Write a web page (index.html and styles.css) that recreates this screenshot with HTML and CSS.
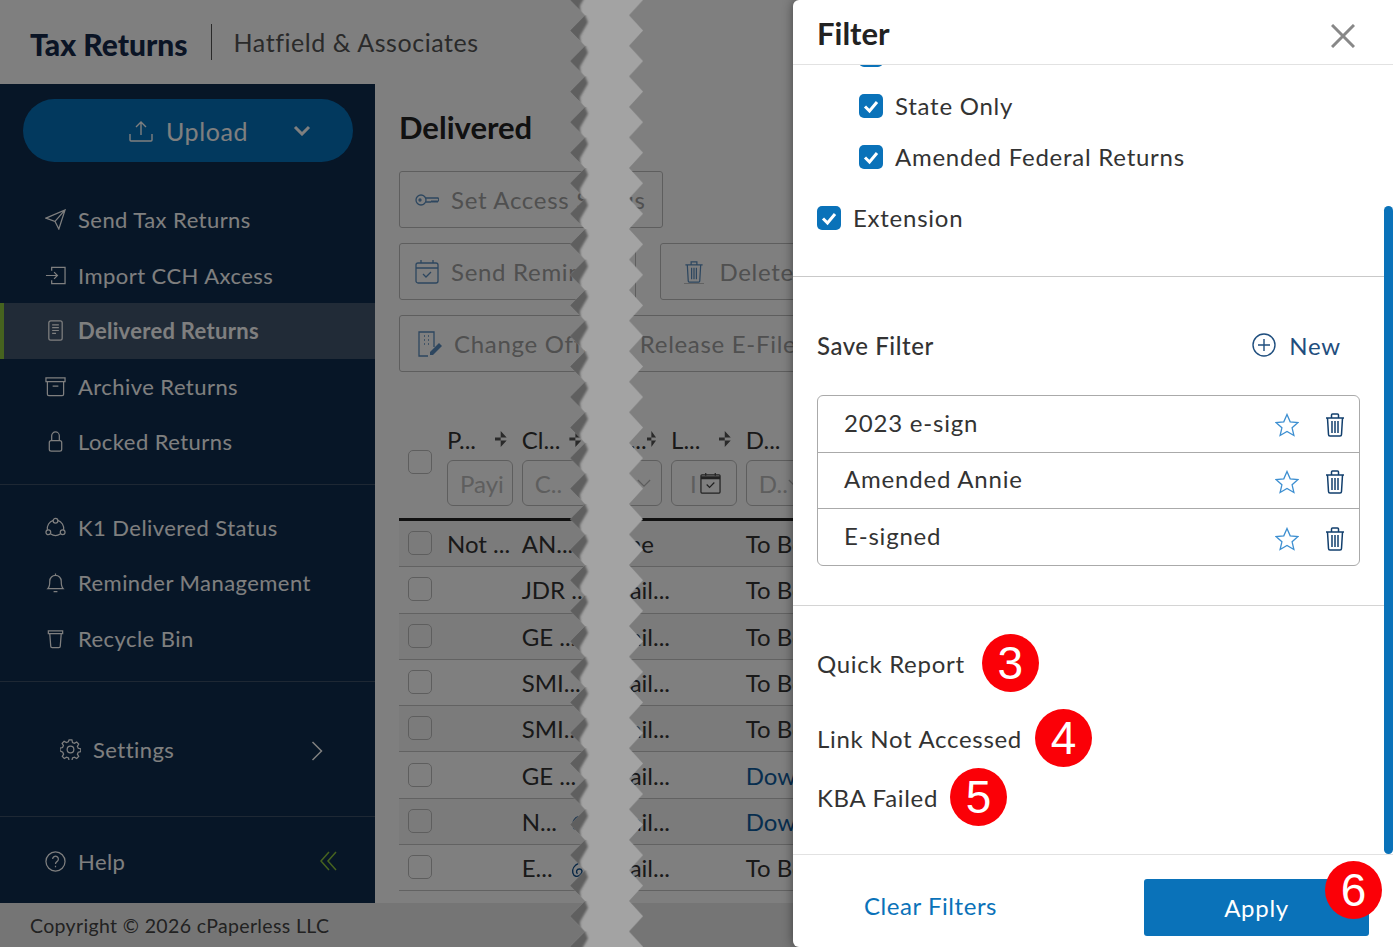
FILE: index.html
```html
<!DOCTYPE html>
<html lang="en">
<head>
<meta charset="utf-8">
<title>Tax Returns</title>
<link rel="stylesheet" href="styles.css">
</head>
<body>
<div class="app">
  <header class="topbar">
    <span class="brand">Tax Returns</span>
    <span class="firm">Hatfield &amp; Associates</span>
  </header>
  <div class="middle">
    <aside class="sidebar">
      <div class="upload-wrap">
        <button class="upload">
          <svg class="up-ico" viewBox="0 0 24 22"><path d="M12 15V2M7 7l5-5 5 5M1 14v6a1 1 0 0 0 1 1h20a1 1 0 0 0 1-1v-6"/></svg>
          <span class="up-text">Upload</span>
          <svg class="up-chev" viewBox="0 0 18 11"><path d="M2 2l7 7 7-7"/></svg>
        </button>
      </div>
      <nav class="nav nav-one">
        <a class="item"><svg class="ico" viewBox="0 0 22 22"><path d="M1 9.5L21 1l-6.500 20-4-8zM10.500 13L21 1"/></svg>Send Tax Returns</a>
        <a class="item"><svg class="ico" viewBox="0 0 22 22"><path d="M7 6V2.500h14v17H7V16M1 11h12M9.500 7.500L13 11l-3.500 3.500"/></svg>Import CCH Axcess</a>
        <a class="item active"><svg class="ico" viewBox="0 0 22 22"><rect x="4" y="1" width="14" height="20" rx="2"/><path d="M7.500 5h7M7.500 8h7M7.500 11h7M7.500 14h4"/></svg>Delivered Returns</a>
        <a class="item"><svg class="ico" viewBox="0 0 22 22"><path d="M1 2h20v4H1zM2.500 6v13a1.500 1.500 0 0 0 1.500 1.500h14a1.500 1.500 0 0 0 1.500-1.500V6M8 10.500h6"/></svg>Archive Returns</a>
        <a class="item"><svg class="ico" viewBox="0 0 22 22"><rect x="4.500" y="10" width="13" height="11" rx="2"/><path d="M7 10V5a4 4 0 0 1 8 0v5"/></svg>Locked Returns</a>
      </nav>
      <nav class="nav nav-two">
        <a class="item"><svg class="ico" viewBox="0 0 22 22"><circle cx="11" cy="4" r="2.500"/><circle cx="3.500" cy="16" r="2.500"/><circle cx="18.500" cy="16" r="2.500"/><path d="M8.700 3.500A9 9 0 0 0 2.500 13.500M13.300 3.500a9 9 0 0 1 6.200 10M6 17.800a9 9 0 0 0 10 0"/></svg>K1 Delivered Status</a>
        <a class="item"><svg class="ico" viewBox="0 0 22 22"><path d="M3 17.500c2-2 2-4 2-8a6 6 0 0 1 12 0c0 4 0 6 2 8zM9 20.500h4M11 1.500v2"/></svg>Reminder Management</a>
        <a class="item"><svg class="ico" viewBox="0 0 22 22"><path d="M3.500 3h15v3h-15zM5 6l1 13a1.500 1.500 0 0 0 1.500 1.500h7A1.500 1.500 0 0 0 16 19l1-13"/></svg>Recycle Bin</a>
      </nav>
      <div class="settings">
        <a class="set-link"><svg class="ico" viewBox="0 0 22 22"><circle cx="11" cy="11" r="3.500"/><path d="M9.500 1h3l.6 2.700 2 .9 2.400-1.400 2.100 2.100-1.400 2.400.9 2 2.700.6v3l-2.700.6-.9 2 1.400 2.400-2.100 2.100-2.400-1.400-2 .9-.6 2.700h-3l-.6-2.700-2-.9-2.400 1.400-2.100-2.100 1.400-2.400-.9-2L0 12.500v-3l2.700-.6.9-2-1.400-2.400 2.100-2.100 2.400 1.400 2-.9z"/></svg>Settings</a>
        <svg class="set-chev" viewBox="0 0 12 20"><path d="M1.500 1l9 9-9 9"/></svg>
      </div>
      <div class="help">
        <a class="set-link"><svg class="ico" viewBox="0 0 22 22"><circle cx="11" cy="11" r="10"/><path d="M8 8.500a3 3 0 1 1 4.500 2.600c-1 .6-1.500 1.200-1.500 2.400M11 15.500v1.500"/></svg>Help</a>
        <svg class="collapse" viewBox="0 0 17 20"><path d="M9 1L1 10l8 9M16 1l-8 9 8 9"/></svg>
      </div>
    </aside>
    <main class="main">
      <h1 class="title">Delivered</h1>
      <div class="actions">
        <button class="act"><svg class="act-ico" viewBox="0 0 24 14"><circle cx="6" cy="7" r="5"/><circle cx="5" cy="7" r="1"/><path d="M11 5h12l1 2-2 2-1-1-1 1-1-1-1 1-1-1-1 1h-5"/></svg>Set Access Status</button>
      </div>
      <div class="actions">
        <button class="act"><svg class="act-ico cal" viewBox="0 0 24 24"><rect x="1" y="3" width="22" height="20" rx="2"/><path d="M1 8h22M6 0v3M18 0v3M8 14l3 3 5-5"/></svg>Send Reminder</button>
        <button class="act"><svg class="act-ico tr" viewBox="0 0 20 24"><path d="M1 5h18M7 5V2h6v3M3 5l1 17a1 1 0 0 0 1 1h10a1 1 0 0 0 1-1l1-17M7.500 8v12M10 8v12M12.500 8v12"/></svg>Delete</button>
      </div>
      <div class="actions">
        <button class="act"><svg class="act-ico off" viewBox="0 0 24 26"><path d="M16 16V1H1v24h9M6 5h1M10 5h1M6 9h1M10 9h1M6 13h1M10 13h1"/><path class="solid" d="M12 21l9-9 3 3-9 9h-3z"/></svg>Change Office / Release E-File</button>
      </div>
      <div class="table">
        <div class="thead">
          <span class="box head-box"></span>
          <div class="th"><div class="lab"><span>P...</span><i class="sort"></i></div><div class="inp">Payi</div></div>
          <div class="th"><div class="lab"><span>Cl...</span><i class="sort"></i></div><div class="inp">C..</div></div>
          <div class="th"><div class="lab"><span>Em...</span><i class="sort"></i></div><div class="inp inp-sel"><svg class="sel" viewBox="0 0 16 10"><path d="M1 1l7 7 7-7"/></svg></div></div>
          <div class="th"><div class="lab"><span>L...</span><i class="sort"></i></div><div class="inp inp-date"><span>I</span><svg class="date" viewBox="0 0 22 22"><rect x="1" y="2" width="20" height="19" rx="1"/><path class="thick" d="M1 5h20"/><path d="M6 0v3M16 0v3M7 12l3 3 5-5"/></svg></div></div>
          <div class="th"><div class="lab"><span>D...</span></div><div class="inp inp-last"><span>D..</span><svg class="sel" viewBox="0 0 16 10"><path d="M1 1l7 7 7-7"/></svg></div></div>
        </div>
        <div class="tr odd"><span class="box"></span><span>Not ...</span><span>AN...</span><span>None</span><span></span><span>To Be Sent</span></div>
        <div class="tr"><span class="box"></span><span></span><span>JDR ...</span><span>Email...</span><span></span><span>To Be Sent</span></div>
        <div class="tr odd"><span class="box"></span><span></span><span>GE ...</span><span>Email...</span><span></span><span>To Be Sent</span></div>
        <div class="tr"><span class="box"></span><span></span><span>SMI...</span><span>Email...</span><span></span><span>To Be Sent</span></div>
        <div class="tr odd"><span class="box"></span><span></span><span>SMI...</span><span>Email...</span><span></span><span>To Be Sent</span></div>
        <div class="tr"><span class="box"></span><span></span><span>GE ...</span><span>Email...</span><span></span><span class="link">Download</span></div>
        <div class="tr odd"><span class="box"></span><span></span><span class="with-ico">N...<svg class="chain" viewBox="0 0 16 18"><path d="M9 2C5 4 2 8 3 12s5 5 8 2 2-6-1-6-4 3-2 5"/></svg></span><span>Email...</span><span></span><span class="link">Download</span></div>
        <div class="tr"><span class="box"></span><span></span><span class="with-ico">E...<svg class="chain" viewBox="0 0 16 18"><path d="M9 2C5 4 2 8 3 12s5 5 8 2 2-6-1-6-4 3-2 5"/></svg></span><span>Email...</span><span></span><span>To Be Sent</span></div>
      </div>
    </main>
  </div>
  <footer class="copy">Copyright © 2026 cPaperless LLC</footer>
</div>

<div class="dim"></div>

<svg class="tear" viewBox="0 0 74 947" aria-hidden="true">
  <defs>
    <filter id="soft" x="-30%" y="-30%" width="160%" height="160%"><feGaussianBlur stdDeviation="1.300"/></filter>
    <clipPath id="tooth"><path d="M15 0L0 15.270 15 30.540H59L73 15.270 59 0z"/></clipPath>
    <pattern id="zig" width="74" height="30.540" y="15.270" patternUnits="userSpaceOnUse">
      <path fill="#a3a3a3" d="M15 0L0 15.270 15 30.540H59L73 15.270 59 0z"/>
      <g clip-path="url(#tooth)">
        <path fill="#5f5f5f" filter="url(#soft)" d="M14 -3L-3 15 11 32 10 21 18 7z"/>
      </g>
    </pattern>
  </defs>
  <rect width="74" height="947" fill="url(#zig)"/>
</svg>

<aside class="drawer">
  <div class="dr-head">
    <h2 class="dr-title">Filter</h2>
    <svg class="close" viewBox="0 0 24 24"><path d="M1 1l22 22M23 1L1 23"/></svg>
  </div>
  <div class="dr-body">
    <div class="scrollbar"></div>
    <label class="check sub clipped"><span class="tick"><svg viewBox="0 0 24 24"><path d="M6 12.500l4.500 4.500L18 8"/></svg></span></label>
    <label class="check sub"><span class="tick"><svg viewBox="0 0 24 24"><path d="M6 12.500l4.500 4.500L18 8"/></svg></span>State Only</label>
    <label class="check sub"><span class="tick"><svg viewBox="0 0 24 24"><path d="M6 12.500l4.500 4.500L18 8"/></svg></span>Amended Federal Returns</label>
    <label class="check ext"><span class="tick"><svg viewBox="0 0 24 24"><path d="M6 12.500l4.500 4.500L18 8"/></svg></span>Extension</label>
    <hr class="rule rule-a">
    <div class="save-row">
      <span class="save">Save Filter</span>
      <span class="new"><svg class="plus" viewBox="0 0 24 24"><circle cx="12" cy="12" r="11"/><path d="M12 6v12M6 12h12"/></svg>New</span>
    </div>
    <ul class="saved">
      <li class="saved-row"><span>2023 e-sign</span><svg class="star" viewBox="0 0 24 24"><path d="M12 1.500l3.200 7.300 7.800.8-5.900 5.200 1.800 7.700-6.900-4-6.900 4 1.800-7.700L1 9.600l7.800-.8z"/></svg><svg class="bin" viewBox="0 0 20 24"><path d="M1 5h18M6.500 5V2a1 1 0 0 1 1-1h5a1 1 0 0 1 1 1v3M2.500 5l1 16.500A1.500 1.500 0 0 0 5 23h10a1.500 1.500 0 0 0 1.500-1.500l1-16.500M7 8v12M10 8v12M13 8v12"/></svg></li>
      <li class="saved-row"><span>Amended Annie</span><svg class="star" viewBox="0 0 24 24"><path d="M12 1.500l3.200 7.300 7.800.8-5.900 5.200 1.800 7.700-6.900-4-6.900 4 1.800-7.700L1 9.600l7.800-.8z"/></svg><svg class="bin" viewBox="0 0 20 24"><path d="M1 5h18M6.500 5V2a1 1 0 0 1 1-1h5a1 1 0 0 1 1 1v3M2.500 5l1 16.500A1.500 1.500 0 0 0 5 23h10a1.500 1.500 0 0 0 1.500-1.500l1-16.500M7 8v12M10 8v12M13 8v12"/></svg></li>
      <li class="saved-row"><span>E-signed</span><svg class="star" viewBox="0 0 24 24"><path d="M12 1.500l3.200 7.300 7.800.8-5.900 5.200 1.800 7.700-6.900-4-6.900 4 1.800-7.700L1 9.600l7.800-.8z"/></svg><svg class="bin" viewBox="0 0 20 24"><path d="M1 5h18M6.500 5V2a1 1 0 0 1 1-1h5a1 1 0 0 1 1 1v3M2.500 5l1 16.500A1.500 1.500 0 0 0 5 23h10a1.500 1.500 0 0 0 1.500-1.500l1-16.500M7 8v12M10 8v12M13 8v12"/></svg></li>
    </ul>
    <hr class="rule rule-b">
    <div class="report r3"><span>Quick Report</span><b class="badge">3</b></div>
    <div class="report r4"><span>Link Not Accessed</span><b class="badge">4</b></div>
    <div class="report r5"><span>KBA Failed</span><b class="badge">5</b></div>
  </div>
  <div class="dr-foot">
    <a class="clear">Clear Filters</a>
    <button class="apply">Apply</button>
    <b class="badge badge-six">6</b>
  </div>
</aside>
</body>
</html>
```

FILE: styles.css
```css
* { box-sizing: border-box; }
html, body { margin: 0; height: 100%; overflow: hidden; }
body { font-family: "Lato", "Open Sans", sans-serif; color: #333; background: #fff; position: relative; }
svg { display: block; flex: none; fill: none; stroke: currentColor; }
button { font: inherit; background: none; }

.app { height: 100vh; display: flex; flex-direction: column; }
.topbar { height: 84px; flex: none; display: flex; align-items: center; padding-left: 30px; background: #fff; }
.brand { font-size: 30px; font-weight: 900; color: #14294a; padding-right: 23px; line-height: 36px; margin-top: 4px; }
.firm { font-size: 25px; color: #555; letter-spacing: .55px; border-left: 1px solid #555; padding-left: 22px; height: 36px; line-height: 36px; margin-top: -1px; }

.middle { flex: 1; display: flex; min-height: 0; }
.sidebar { width: 375px; flex: none; background: #0e2c4e; color: #fff; display: flex; flex-direction: column; }
.upload-wrap { padding: 15px 22px 30px 23px; }
.upload { width: 100%; height: 63px; border: 0; border-radius: 32px; background: #0572bc; color: #fff; display: flex; align-items: center; padding-left: 106px; }
.up-ico { width: 24px; height: 22px; stroke-width: 1.400; }
.up-text { font-size: 25px; margin-left: 13px; letter-spacing: .6px; }
.up-chev { width: 18px; height: 11px; stroke-width: 3; margin-left: 45px; }

.nav { display: flex; flex-direction: column; }
.nav-one { padding-bottom: 14px; border-bottom: 1px solid #3d5068; }
.nav-two { padding: 15px 0; border-bottom: 1px solid #3d5068; }
.item { height: 55.500px; display: flex; align-items: center; font-size: 22px; letter-spacing: .45px; padding-left: 45px; gap: 12px; }
.ico { width: 21px; height: 21px; stroke-width: 1.300; }
.item.active { background: #42566f; border-left: 4px solid #8dc63f; padding-left: 41px; font-weight: 700; letter-spacing: .3px; }
.settings { height: 135px; display: flex; align-items: center; padding-left: 60px; border-bottom: 1px solid #3d5068; }
.set-link { display: flex; align-items: center; font-size: 22px; letter-spacing: .45px; gap: 12px; }
.set-chev { width: 12px; height: 20px; stroke-width: 1.500; margin-left: 137px; margin-top: 3px; }
.help { flex: 1; display: flex; align-items: center; padding-left: 45px; padding-top: 2px; }
.collapse { width: 17px; height: 20px; stroke: #8dc63f; stroke-width: 1.500; margin-left: 195px; }

.main { flex: 1; min-width: 0; overflow: hidden; padding: 24px 0 0 24px; background: #fff; }
.title { margin: 0 0 25px; font-size: 31px; line-height: 38px; font-weight: 700; color: #222; }
.actions { display: flex; gap: 24px; margin-bottom: 15px; }
.act { height: 57px; display: flex; align-items: center; gap: 12px; padding: 0 16px 0 15px; border: 1px solid #bdbdbd; border-radius: 3px; color: #a0a0a0; font-size: 24px; letter-spacing: .7px; white-space: nowrap; }
.act-ico { width: 24px; height: 14px; color: #5a8dbe; stroke-width: 1.300; }
.act-ico.cal { height: 24px; }
.act-ico.tr { width: 20px; height: 24px; margin: 0 3px 0 8px; }
.act-ico.off { height: 26px; margin-left: 3px; }
.act-ico .solid { fill: #5a8dbe; stroke: none; }

.table { margin-top: 46px; font-size: 24px; color: #333; }
.thead, .tr { display: grid; grid-template-columns: 48px 74.700px 74.700px 74.700px 74.700px 1fr; }
.thead { height: 103px; border-bottom: 3px solid #222; align-items: start; padding-bottom: 0; }
.box { display: block; width: 24px; height: 24px; margin-left: 9px; border: 1px solid #bdbdbd; border-radius: 5px; }
.head-box { margin-top: 32px; }
.th { white-space: nowrap; }
.lab { height: 42px; display: flex; align-items: center; justify-content: space-between; padding-right: 15px; margin-top: 0; }
.sort { display: block; width: 12px; height: 16px; background: #555; clip-path: polygon(50% 0, 100% 40%, 0 40%, 0 60%, 100% 60%, 50% 100%); }
.inp { width: 66px; height: 46px; border: 1px solid #bdbdbd; border-radius: 6px; display: flex; align-items: center; padding-left: 12px; color: #bcbcbc; overflow: hidden; }
.inp-sel { justify-content: flex-end; padding-right: 10px; }
.inp-date { justify-content: space-between; padding: 0 15px 0 18px; }
.inp-last { gap: 0; }
.sel { width: 14px; height: 9px; color: #bbb; stroke-width: 1.500; flex: none; }
.date { width: 21px; height: 21px; color: #444; stroke-width: 1.300; }
.date .thick { stroke-width: 3; }
.tr { height: 46.300px; align-items: center; border-bottom: 1px solid #c4c4c4; white-space: nowrap; background: #fff; }
.tr.odd { background: #f6f6f6; }
.tr .box { margin-top: -1px; }
.link { color: #0f5c9e; }
.with-ico { display: flex; align-items: center; justify-content: space-between; padding-right: 11px; }
.chain { width: 15px; height: 18px; color: #0f4d8a; stroke-width: 1.500; margin-top: 4px; }

.copy { height: 44px; flex: none; display: flex; align-items: center; padding-left: 30px; font-size: 19.500px; letter-spacing: .35px; background: #ebebeb; color: #444; }

.dim { position: absolute; inset: 0; background: rgba(0, 0, 0, .5); }
.tear { position: absolute; left: 570px; top: 0; width: 74px; height: 947px; stroke: none; }

.drawer { position: absolute; top: 0; right: 0; bottom: 0; width: 600px; background: #fff; display: flex; flex-direction: column; border-radius: 6px 0 0 6px; box-shadow: 0 0 11px rgba(0, 0, 0, .45); }
.dr-head { height: 65px; flex: none; border-bottom: 1px solid #e2e2e2; display: flex; align-items: flex-start; justify-content: space-between; padding: 14px 38px 0 24px; }
.dr-title { margin: 0; font-size: 31px; line-height: 38px; font-weight: 700; color: #222; }
.close { width: 24px; height: 24px; color: #888; stroke-width: 3; margin-top: 10px; }
.dr-body { flex: 1; min-height: 0; position: relative; overflow: hidden; font-size: 24px; color: #333; }
.scrollbar { position: absolute; right: 0; top: 141px; bottom: 0; width: 9px; border-radius: 5px; background: #0a72b9; }
.check { display: flex; align-items: center; gap: 12px; height: 24px; letter-spacing: .75px; line-height: 24px; }
.tick { width: 24px; height: 24px; border-radius: 5px; background: #0a72b9; color: #fff; flex: none; }
.tick svg { width: 24px; height: 24px; stroke-width: 3; }
.sub { margin: 0 0 27px 66px; }
.clipped { margin-top: -22px; }
.ext { margin: 37px 0 0 24px; }
.rule { border: 0; height: 1px; margin: 0; background: #c9c9c9; }
.rule-a { margin-top: 46px; margin-right: 9px; }
.rule-b { margin-top: 39px; margin-right: 9px; background: #d4d4d4; }
.save-row { display: flex; align-items: center; justify-content: space-between; height: 24px; margin: 56px 52px 0 24px; }
.save { letter-spacing: .55px; font-weight: 500; }
.new { display: flex; align-items: center; gap: 13px; color: #1f4e7e; letter-spacing: .8px; }
.plus { width: 24px; height: 24px; stroke-width: 1.400; }
.saved { list-style: none; margin: 38px 33px 0 24px; padding: 0; height: 171px; border: 1px solid #aaa; border-radius: 6px; }
.saved-row { height: 56.500px; display: flex; align-items: center; padding: 0 14px 0 26px; border-bottom: 1px solid #aaa; letter-spacing: .8px; }
.saved-row:last-child { border-bottom: 0; }
.saved-row span { flex: 1; margin-top: -3px; }
.star { width: 24px; height: 24px; color: #3d8fd1; stroke-width: 1.300; margin-top: 3px; }
.bin { width: 20px; height: 24px; color: #123f6d; stroke-width: 1.500; margin: 3px 0 0 26px; }
.report { display: flex; align-items: center; margin-left: 24px; letter-spacing: .7px; }
.r3 { margin-top: 28px; gap: 17px; }
.r4 { margin-top: 17px; gap: 13px; }
.r5 { margin-top: 1px; gap: 12px; }
.badge { width: 57px; height: 58px; border-radius: 50%; background: #fb0007; color: #fff; display: flex; align-items: center; justify-content: center; font: 400 46px "Liberation Sans", Arial, sans-serif; letter-spacing: 0; }
.dr-foot { height: 93px; flex: none; position: relative; border-top: 1px solid #e2e2e2; display: flex; justify-content: space-between; align-items: flex-start; padding: 24px 24px 0 71px; font-size: 24px; }
.clear { color: #0a72b9; letter-spacing: .55px; margin-top: 12px; }
.apply { width: 225px; height: 57px; border: 0; border-radius: 3px; background: #0a72b9; color: #fff; letter-spacing: .7px; }
.badge-six { position: absolute; left: 532px; top: 6px; }
```
